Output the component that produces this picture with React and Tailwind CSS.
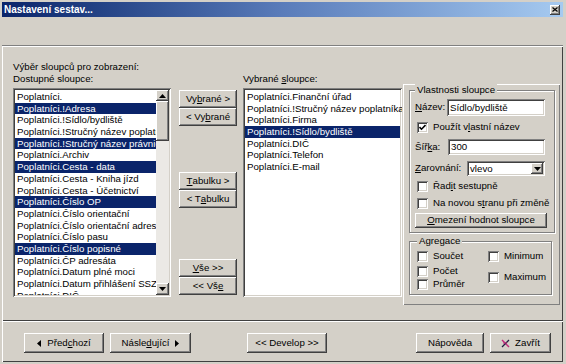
import React from "react";

const raised =
  "bg-[#d4d0c8] shadow-[inset_-1px_-1px_0_#404040,inset_1px_1px_0_#ffffff,inset_-2px_-2px_0_#808080]";
const sunken =
  "bg-white shadow-[inset_1px_1px_0_#808080,inset_-1px_-1px_0_#ffffff,inset_2px_2px_0_#404040,inset_-2px_-2px_0_#d4d0c8]";

const available = [
  ["Poplatníci.", false],
  ["Poplatníci.!Adresa", true],
  ["Poplatníci.!Sídlo/bydliště", false],
  ["Poplatníci.!Stručný název poplatníka", false],
  ["Poplatníci.!Stručný název právnické osoby", true],
  ["Poplatníci.Archiv", false],
  ["Poplatníci.Cesta - data", true],
  ["Poplatníci.Cesta - Kniha jízd", false],
  ["Poplatníci.Cesta - Účetnictví", false],
  ["Poplatníci.Číslo OP", true],
  ["Poplatníci.Číslo orientační", false],
  ["Poplatníci.Číslo orientační adresáta", false],
  ["Poplatníci.Číslo pasu", false],
  ["Poplatníci.Číslo popisné", true],
  ["Poplatníci.ČP adresáta", false],
  ["Poplatníci.Datum plné moci", false],
  ["Poplatníci.Datum přihlášení SSZ", false],
  ["Poplatníci.DIČ", false],
];

const chosen = [
  ["Poplatníci.Finanční úřad", false],
  ["Poplatníci.!Stručný název poplatníka", false],
  ["Poplatníci.Firma", false],
  ["Poplatníci.!Sídlo/bydliště", true],
  ["Poplatníci.DIČ", false],
  ["Poplatníci.Telefon", false],
  ["Poplatníci.E-mail", false],
];

function U({ children }) {
  return <span className="underline underline-offset-[1px]">{children}</span>;
}

function Btn({ className = "", children }) {
  return (
    <div className={`${raised} flex items-center justify-center whitespace-nowrap ${className}`}>
      {children}
    </div>
  );
}

function Row({ text, sel }) {
  return (
    <div
      className={`h-[11.7px] leading-[11.7px] pl-[2px] whitespace-nowrap ${
        sel ? "bg-[#0a246a] text-white" : ""
      }`}
    >
      {text}
    </div>
  );
}

function Arrow({ dir }) {
  return (
    <svg width="7" height="4" viewBox="0 0 7 4">
      {dir === "up" ? (
        <polygon points="3.5,0 7,4 0,4" fill="#000" />
      ) : (
        <polygon points="0,0 7,0 3.5,4" fill="#000" />
      )}
    </svg>
  );
}

function Check({ checked, children, className = "" }) {
  return (
    <div className={`flex items-center h-[11px] ${className}`}>
      <div className={`${sunken} w-[11px] h-[11px] flex items-center justify-center shrink-0`}>
        {checked && (
          <svg width="7" height="7" viewBox="0 0 7 7">
            <polyline points="0.5,3 2.5,5.2 6.5,1" fill="none" stroke="#000" strokeWidth="1.6" />
          </svg>
        )}
      </div>
      <span className="ml-[5px] whitespace-nowrap">{children}</span>
    </div>
  );
}

function Group({ title, className = "", children }) {
  return (
    <fieldset
      className={`border border-[#808080] shadow-[inset_1px_1px_0_#ffffff,1px_1px_0_#ffffff] ${className}`}
    >
      <legend className="px-[2px] h-[12px] leading-[12px] bg-[#d4d0c8]">{title}</legend>
      {children}
    </fieldset>
  );
}

export default function App() {
  return (
    <div className="w-[566px] h-[364px] bg-[#d4d0c8] overflow-hidden flex flex-col pt-[2px] pl-[2px] pr-[3px] text-[9.7px] text-black font-['Liberation_Sans',Arial,sans-serif]">
      {/* title bar */}
      <div className="h-[15px] shrink-0 flex items-center bg-linear-to-r from-[#0a246a] via-[#5a7cba] to-[#a6caf0] pl-[2px] pr-[3px]">
        <span className="text-white font-bold text-[10px] leading-[15px]">Nastavení sestav...</span>
        <div className={`${raised} ml-auto w-[10px] h-[10px] flex items-center justify-center`}>
          <svg width="6" height="5" viewBox="0 0 6 5">
            <path d="M0.5 0.5 L5.5 4.5 M5.5 0.5 L0.5 4.5" stroke="#000" strokeWidth="1.2" />
          </svg>
        </div>
      </div>

      {/* empty toolbar strip */}
      <div className="h-[29px] shrink-0 border-b border-[#808080]" />

      {/* main panel */}
      <div className="h-[275px] shrink-0 pl-[11px] pt-[15px] shadow-[inset_1px_1px_0_#ffffff,inset_-1px_-1px_0_#404040]">
        <div className="h-[12px] leading-[12px]">Výběr sloupců pro zobrazení:</div>
        <div className="flex items-start">
          {/* available */}
          <div className="w-[158px] shrink-0">
            <div className="h-[12px] leading-[12px]">Dostupné sloupce:</div>
            <div className={`${sunken} mt-[3px] h-[209px] flex p-[2px]`}>
              <div className="flex-1 overflow-hidden pt-[1px]">
                {available.map(([t, s]) => (
                  <Row key={t} text={t} sel={s} />
                ))}
              </div>
              <div className="w-[13px] shrink-0 flex flex-col bg-[#ebe9e5]">
                <Btn className="h-[11px]">
                  <Arrow dir="up" />
                </Btn>
                <div className={`${raised} h-[40px]`} />
                <div className="flex-1" />
                <Btn className="h-[12px]">
                  <Arrow dir="down" />
                </Btn>
              </div>
            </div>
          </div>

          {/* move buttons */}
          <div className="ml-[8px] w-[58px] shrink-0 mt-[17px] flex flex-col">
            <Btn className="h-[18px]">
              Vy<U>b</U>rané &gt;
            </Btn>
            <Btn className="h-[18px]">
              &lt; Vy<U>b</U>rané
            </Btn>
            <div className="h-[46px]" />
            <Btn className="h-[18px]">
              <U>T</U>abulku &gt;
            </Btn>
            <Btn className="h-[18px]">
              &lt; T<U>a</U>bulku
            </Btn>
            <div className="h-[51px]" />
            <Btn className="h-[18px]">
              <U>V</U>še &gt;&gt;
            </Btn>
            <Btn className="h-[18px]">
              &lt;&lt; Vš<U>e</U>
            </Btn>
          </div>

          {/* chosen */}
          <div className="ml-[6px] w-[159px] shrink-0">
            <div className="h-[12px] leading-[12px]">
              Vybrané <U>s</U>loupce:
            </div>
            <div className={`${sunken} mt-[3px] h-[209px] p-[2px] pt-[3px] overflow-hidden`}>
              {chosen.map(([t, s]) => (
                <Row key={t} text={t} sel={s} />
              ))}
            </div>
          </div>

          {/* properties */}
          <div className="ml-[1px] w-[157px] shrink-0 mt-[11px] h-[221px] shadow-[inset_1px_1px_0_#ffffff,inset_-1px_-1px_0_#808080]">
            <Group title="Vlastnosti sloupce" className="ml-[6px] w-[143px] px-[5px] pb-[4px]">
              <div className="flex items-center h-[17px] mt-[3px]">
                <span className="w-[32px]">
                  <U>N</U>ázev:
                </span>
                <div className={`${sunken} w-[98px] h-[17px] leading-[17px] pl-[3px]`}>Sídlo/bydliště</div>
              </div>
              <Check checked className="mt-[6px] ml-[2px]">
                Použít v<U>l</U>astní název
              </Check>
              <div className="flex items-center h-[16px] mt-[6px]">
                <span className="w-[33px]">
                  Šíř<U>k</U>a:
                </span>
                <div className={`${sunken} w-[97px] h-[16px] leading-[16px] pl-[3px]`}>300</div>
              </div>
              <div className="flex items-center h-[15px] mt-[6px]">
                <span className="w-[52px]">
                  <U>Z</U>arovnání:
                </span>
                <div className={`${sunken} w-[78px] h-[15px] flex p-[2px]`}>
                  <span className="flex-1 leading-[11px] pl-[1px]">vlevo</span>
                  <Btn className="w-[12px] h-[11px]">
                    <Arrow dir="down" />
                  </Btn>
                </div>
              </div>
              <Check className="mt-[5px] ml-[2px]">
                Řad<U>i</U>t sestupně
              </Check>
              <Check className="mt-[6px] ml-[2px]">
                Na novou s<U>t</U>ranu při změně
              </Check>
              <Btn className="mt-[4px] w-[132px] h-[15px]">
                <span>
                  <U>O</U>mezení hodnot sloupce
                </span>
              </Btn>
            </Group>

            <Group title="Agregace" className="ml-[6px] mt-[2px] w-[143px] pl-[7px] pb-[4px]">
              <div className="flex">
                <div className="w-[71px] flex flex-col">
                  <Check className="mt-[4px]">Součet</Check>
                  <Check className="mt-[4px]">Počet</Check>
                  <Check className="mt-[2px]">Průměr</Check>
                </div>
                <div className="flex flex-col">
                  <Check className="mt-[4px]">Minimum</Check>
                  <Check className="mt-[10px]">Maximum</Check>
                </div>
              </div>
            </Group>
          </div>
        </div>
      </div>

      {/* bottom bar */}
      <div className="h-[41px] shrink-0 flex items-start pt-[12px] pl-[22px] shadow-[inset_1px_1px_0_#ffffff,inset_-1px_-1px_0_#404040]">
        <Btn className="w-[80px] h-[20px] gap-[6px]">
          <svg width="4" height="7" viewBox="0 0 4 7">
            <polygon points="4,0 4,7 0,3.5" fill="#000" />
          </svg>
          <span>
            Před<U>c</U>hozí
          </span>
        </Btn>
        <Btn className="ml-[6px] w-[81px] h-[20px] gap-[6px]">
          <span>
            Násle<U>d</U>ující
          </span>
          <svg width="4" height="7" viewBox="0 0 4 7">
            <polygon points="0,0 4,3.5 0,7" fill="#000" />
          </svg>
        </Btn>
        <Btn className="ml-[56px] w-[80px] h-[20px]">&lt;&lt; Develop &gt;&gt;</Btn>
        <Btn className="ml-[89px] w-[68px] h-[20px]">Nápověda</Btn>
        <Btn className="ml-[6px] w-[61px] h-[20px] gap-[5px]">
          <svg width="9" height="9" viewBox="0 0 9 9">
            <path d="M1 1 L8 8" stroke="#c02a7a" strokeWidth="1.4" />
            <path d="M8 1 L1 8" stroke="#202040" strokeWidth="1.2" />
            <path d="M2 4 L6 4" stroke="#c02a7a" strokeWidth="1" />
          </svg>
          <span>Zavřít</span>
        </Btn>
      </div>
    </div>
  );
}
